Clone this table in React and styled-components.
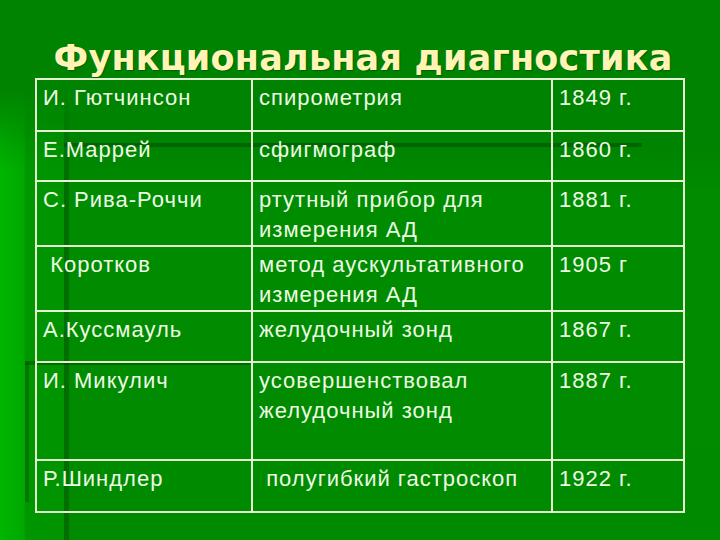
import React from 'react'
import styled, { createGlobalStyle } from 'styled-components';

const Global = createGlobalStyle`
  html, body {
    margin: 0;
    padding: 0;
    background: #008600;
  }
`

// decorative stripes of the slide template, drawn as background layers
const Slide = styled.div`
  width: 720px;
  height: 540px;
  overflow: hidden;
  background:
    linear-gradient(rgba(0, 70, 0, 0.5), rgba(0, 70, 0, 0.5)) 64px 143px / 578px 4px no-repeat,
    linear-gradient(rgba(0, 70, 0, 0.5), rgba(0, 70, 0, 0.5)) 25px 361px / 226px 4px no-repeat,
    linear-gradient(rgba(0, 80, 0, 0.45), rgba(0, 80, 0, 0.45)) 25px 362px / 4px 140px no-repeat,
    linear-gradient(to bottom, #008300, rgba(0, 131, 0, 0)) 0 90px / 72px 80px no-repeat,
    linear-gradient(to right, #00b600 0, #00a800 24px, #009600 26px, #009400 64px, #006e00 64px, #006e00 69px, transparent 69px) 0 90px / 72px 450px no-repeat,
    linear-gradient(to bottom, #008300 0, #008300 140px, #008c00 200px, #008a00 100%);
  font-family: "Liberation Sans", Arial, sans-serif;
`

const Title = styled.h1`
  margin: 0;
  height: 78px;
  padding: 38px 0 0 6px;
  box-sizing: border-box;
  text-align: center;
  font-family: "DejaVu Sans", "Liberation Sans", sans-serif;
  font-weight: 900;
  font-size: 35px;
  line-height: 40px;
  letter-spacing: 0.2px;
  color: #fff3b6;
  text-shadow: 1px 1px 1px rgba(0, 50, 0, 0.45);
  white-space: nowrap;
`

const Table = styled.table`
  margin: 0 auto;
  width: 648px;
  border-collapse: collapse;
  table-layout: fixed;
`

const Row = styled.tr`
  height: ${p => p.$h}px;
`

const Cell = styled.td`
  border: 2px solid #e4f2d2;
  vertical-align: top;
  padding: 3px 6px 0;
  font-size: 22px;
  line-height: 30px;
  letter-spacing: 1px;
  color: #eefbe4;
  white-space: pre-wrap;
`

const rows = [
  { h: 52, name: 'И. Гютчинсон', what: 'спирометрия', year: '1849 г.' },
  { h: 50, name: 'Е.Маррей', what: 'сфигмограф', year: '1860 г.' },
  { h: 65, name: 'С. Рива-Роччи', what: 'ртутный прибор для измерения АД', year: '1881 г.' },
  { h: 64, name: ' Коротков', what: 'метод аускультативного измерения АД', year: '1905 г' },
  { h: 51, name: 'А.Куссмауль', what: 'желудочный зонд', year: '1867 г.' },
  { h: 98, name: 'И. Микулич', what: 'усовершенствовал желудочный зонд', year: '1887 г.' },
  { h: 52, name: 'Р.Шиндлер', what: ' полугибкий гастроскоп', year: '1922 г.' },
]

function App() {
  return (
    <Slide>
      <Global />
      <Title>Функциональная диагностика</Title>
      <Table>
        <colgroup>
          <col style={{ width: 216 }} />
          <col style={{ width: 300 }} />
          <col style={{ width: 132 }} />
        </colgroup>
        <tbody>
          {rows.map((r, i) => (
            <Row key={i} $h={r.h}>
              <Cell>{r.name}</Cell>
              <Cell>{r.what}</Cell>
              <Cell>{r.year}</Cell>
            </Row>
          ))}
        </tbody>
      </Table>
    </Slide>
  )
}

export default App
